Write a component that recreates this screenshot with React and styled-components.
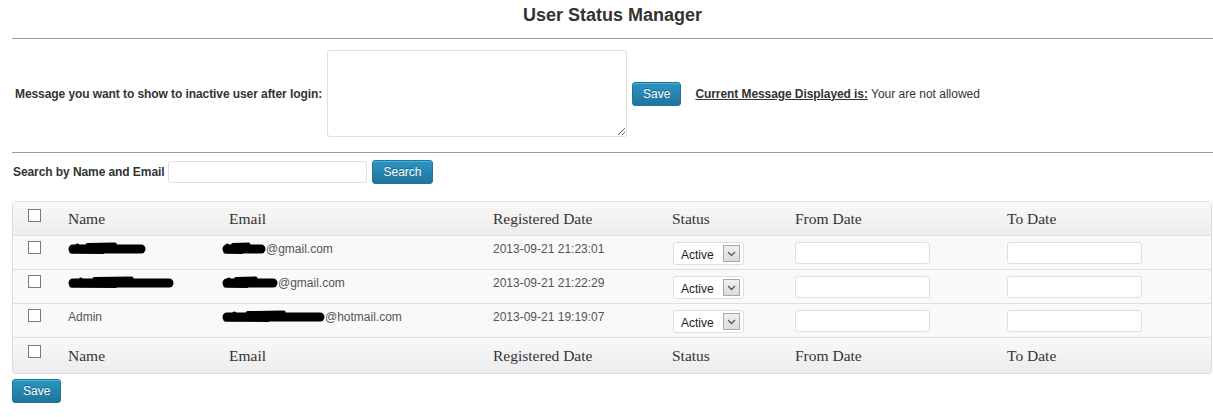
import React from 'react'
import styled, { createGlobalStyle } from 'styled-components';

const users = [
  { id: 1, name: null, nameBlot: 78, emailBlot: 44, domain: '@gmail.com', date: '2013-09-21 21:23:01' },
  { id: 2, name: null, nameBlot: 106, emailBlot: 56, domain: '@gmail.com', date: '2013-09-21 21:22:29' },
  { id: 3, name: 'Admin', nameBlot: 0, emailBlot: 103, domain: '@hotmail.com', date: '2013-09-21 19:19:07' },
];

const columns = ['Name', 'Email', 'Registered Date', 'Status', 'From Date', 'To Date'];

// redacted text in the screenshot is a black marker scribble
const Scribble = ({ width }) => (
  <Blot width={width} height="13" viewBox={`0 0 ${width} 13`}>
    <path d={`M5 7 L${width - 5} 7`} stroke="#000" strokeWidth="9" strokeLinecap="round" />
    <path d={`M${width * 0.25} 3 L${width * 0.6} 2.5`} stroke="#000" strokeWidth="4" strokeLinecap="round" />
    <path d={`M3 10 L${width * 0.45} 10.5`} stroke="#000" strokeWidth="3" strokeLinecap="round" />
    <circle cx={width * 0.12} cy="3.5" r="2" fill="#000" />
  </Blot>
);

const StatusSelect = () => (
  <SelectWrap>
    <Select defaultValue="active">
      <option value="active">Active</option>
      <option value="inactive">Inactive</option>
    </Select>
    <ArrowBox>
      <svg width="9" height="6" viewBox="0 0 9 6">
        <path d="M1 1 L4.5 4.5 L8 1" fill="none" stroke="#555" strokeWidth="1.3" />
      </svg>
    </ArrowBox>
  </SelectWrap>
);

const HeadRow = () => (
  <tr>
    <Th $box><Check type="checkbox" /></Th>
    {columns.map((c) => (
      <Th key={c} $indent={c === 'Email' ? 7 : 0}>{c}</Th>
    ))}
  </tr>
);

const App = () => {
  return (
    <>
      <GlobalStyle />
      <Page>
        <Title>User Status Manager</Title>
        <Divider />
        <MessageRow>
          <Label>Message you want to show to inactive user after login:</Label>
          <MessageBox />
          <Btn $ml={5}>Save</Btn>
          <Current>
            <u>Current Message Displayed is:</u> Your are not allowed
          </Current>
        </MessageRow>
        <Divider />
        <SearchRow>
          <Label>Search by Name and Email</Label>
          <SearchInput type="text" />
          <Btn $ml={5}>Search</Btn>
        </SearchRow>
        <Table>
          <colgroup>
            <col style={{ width: 55 }} />
            <col style={{ width: 154 }} />
            <col style={{ width: 271 }} />
            <col style={{ width: 179 }} />
            <col style={{ width: 123 }} />
            <col style={{ width: 212 }} />
            <col />
          </colgroup>
          <thead><HeadRow /></thead>
          <tbody>
            {users.map((u) => (
              <Row key={u.id}>
                <Td $box><Check type="checkbox" /></Td>
                <Td>{u.name ? u.name : <Scribble width={u.nameBlot} />}</Td>
                <Td><Scribble width={u.emailBlot} />{u.domain}</Td>
                <Td>{u.date}</Td>
                <Td $field><StatusSelect /></Td>
                <Td $field><DateInput type="text" /></Td>
                <Td $field><DateInput type="text" /></Td>
              </Row>
            ))}
          </tbody>
          <Foot><HeadRow /></Foot>
        </Table>
        <Btn $mt={5}>Save</Btn>
      </Page>
    </>
  )
}

const GlobalStyle = createGlobalStyle`
  body {
    margin: 0;
    background: #fff;
    color: #333;
    font-family: "Liberation Sans", Arial, sans-serif;
    font-size: 12px;
  }
`;

const Page = styled.div`
  padding-left: 12px;
`;

const Title = styled.h2`
  margin: 5px 0 12px;
  font-size: 18px;
  line-height: 21px;
  font-weight: bold;
  text-align: center;
  color: #333;
`;

const Divider = styled.div`
  border-top: 1px solid #9d9d9d;
`;

const MessageRow = styled.div`
  display: flex;
  align-items: center;
  padding: 11px 0 15px 3px;
`;

const Label = styled.span`
  font-weight: bold;
  font-size: 12px;
  letter-spacing: -0.08px;
  color: #333;
`;

const MessageBox = styled.textarea`
  width: 300px;
  height: 87px;
  box-sizing: border-box;
  margin-left: 5px;
  border: 1px solid #dfdfdf;
  border-radius: 3px;
  background: #fff;
  font-family: inherit;
`;

const Btn = styled.button`
  height: 24px;
  box-sizing: border-box;
  padding: 0 10px;
  margin-left: ${(p) => p.$ml || 0}px;
  margin-top: ${(p) => p.$mt || 0}px;
  border: 1px solid #21759b;
  border-radius: 3px;
  background: linear-gradient(to bottom, #2a95c5, #21759b);
  color: #fff;
  font-family: "Liberation Sans", Arial, sans-serif;
  font-size: 12px;
  text-shadow: 0 -1px 0 rgba(0, 0, 0, 0.3);
  box-shadow: inset 0 1px 0 rgba(120, 200, 230, 0.5);
  cursor: pointer;
`;

const Current = styled.span`
  margin-left: 14px;
  color: #333;
  u {
    font-weight: bold;
    letter-spacing: -0.08px;
  }
`;

const SearchRow = styled.div`
  display: flex;
  align-items: center;
  padding: 7px 0 0 1px;
`;

const SearchInput = styled.input`
  width: 199px;
  height: 22px;
  box-sizing: border-box;
  margin-left: 4px;
  border: 1px solid #dfdfdf;
  border-radius: 3px;
`;

const Table = styled.table`
  width: 1200px;
  margin-top: 17px;
  table-layout: fixed;
  border-spacing: 0;
  border-collapse: separate;
  border: 1px solid #dfdfdf;
  border-radius: 3px;
  background: #f9f9f9;
`;

const Th = styled.th`
  height: 34px;
  padding: ${(p) => (p.$box ? '7px 0 0 15px' : `0 0 0 ${p.$indent}px`)};
  vertical-align: ${(p) => (p.$box ? 'top' : 'middle')};
  text-align: left;
  font-family: "Liberation Serif", "Times New Roman", serif;
  font-size: 15.5px;
  font-weight: normal;
  color: #333;
  background: linear-gradient(to bottom, #f9f9f9, #ececec);
  border-bottom: 1px solid #dfdfdf;
  box-sizing: border-box;
`;

const Foot = styled.tfoot`
  th {
    border-bottom: none;
    height: 35px;
  }
`;

const Row = styled.tr`
  height: 34px;
  td {
    border-bottom: 1px solid #dfdfdf;
  }
`;

const Td = styled.td`
  vertical-align: top;
  padding: ${(p) => (p.$box ? '5px 0 0 15px' : '6px 0 0 0')};
  font-size: 12px;
  line-height: 14px;
  color: #555;
  white-space: nowrap;
  padding-left: ${(p) => (p.$field ? '1px' : undefined)};
`;

const Check = styled.input`
  appearance: none;
  display: block;
  width: 13px;
  height: 13px;
  margin: 0;
  border: 1px solid #7a7a7a;
  background: #fff;
  box-sizing: border-box;
`;

const Blot = styled.svg`
  display: inline-block;
  vertical-align: middle;
  margin-top: -2px;
`;

const SelectWrap = styled.div`
  position: relative;
  width: 71px;
  height: 23px;
  box-sizing: border-box;
  border: 1px solid #dfdfdf;
  border-radius: 3px;
  background: #fff;
`;

const Select = styled.select`
  appearance: none;
  width: 100%;
  height: 100%;
  border: none;
  background: transparent;
  padding: 2px 0 0 7px;
  font-family: "Liberation Sans", Arial, sans-serif;
  font-size: 12px;
  color: #222;
  outline: none;
`;

const ArrowBox = styled.span`
  position: absolute;
  right: 3px;
  top: 2px;
  width: 17px;
  height: 17px;
  box-sizing: border-box;
  display: flex;
  align-items: center;
  justify-content: center;
  border: 1px solid #a8a8a8;
  background: linear-gradient(to bottom, #f0f0f0, #dcdcdc);
  pointer-events: none;
`;

const DateInput = styled.input`
  width: 135px;
  height: 22px;
  box-sizing: border-box;
  margin-left: -1px;
  border: 1px solid #dfdfdf;
  border-radius: 3px;
  background: #fff;
`;

export default App
